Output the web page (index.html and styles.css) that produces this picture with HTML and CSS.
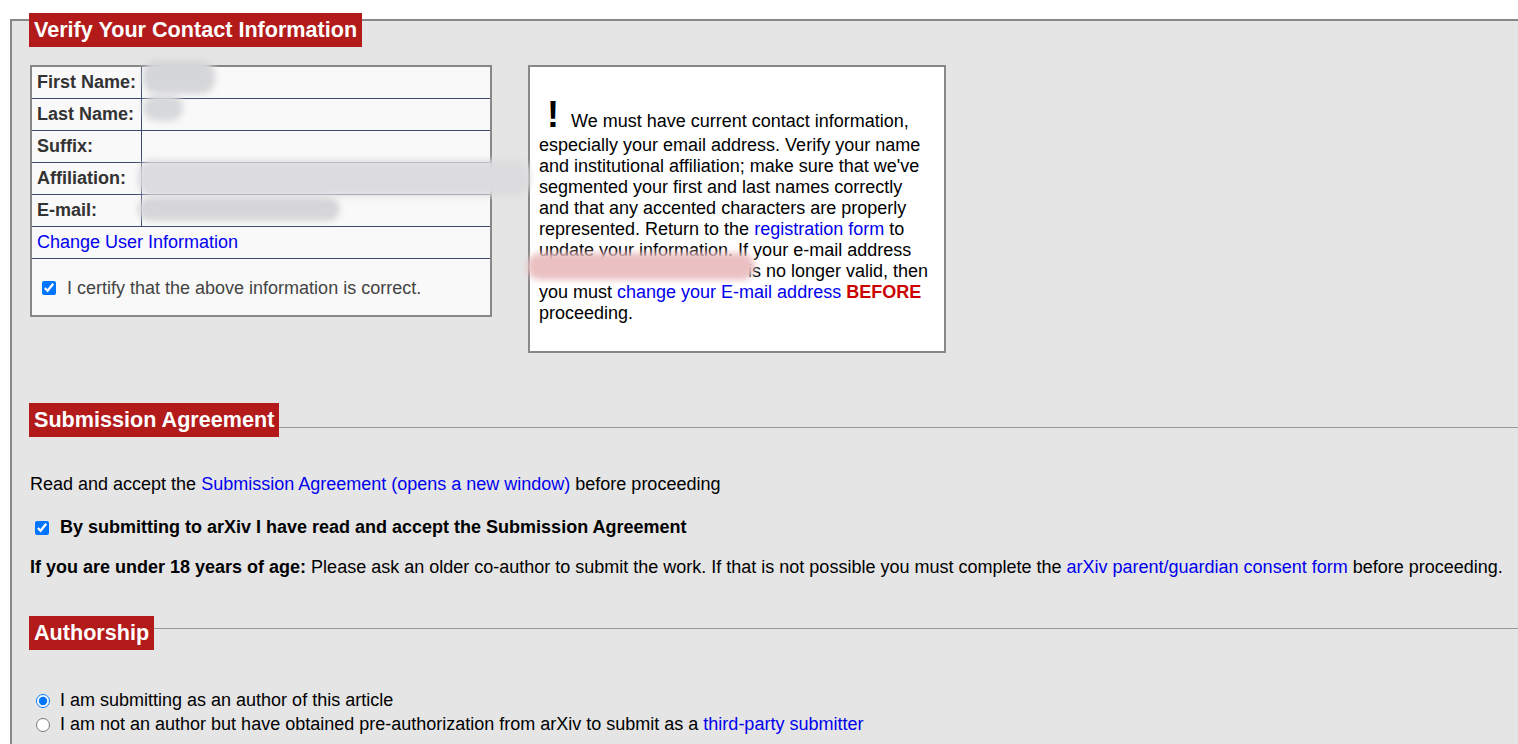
FILE: index.html
```html
<!DOCTYPE html>
<html>
<head>
<meta charset="utf-8">
<link rel="stylesheet" href="styles.css">
</head>
<body>
<div class="panel">
  <div class="legend main-legend">Verify Your Contact Information</div>

  <div class="contact">
    <table class="info">
      <tr><th>First Name:</th><td></td></tr>
      <tr><th>Last Name:</th><td></td></tr>
      <tr><th>Suffix:</th><td></td></tr>
      <tr><th>Affiliation:</th><td></td></tr>
      <tr><th>E-mail:</th><td></td></tr>
      <tr><td colspan="2" class="link-cell"><a href="#">Change User Information</a></td></tr>
      <tr><td colspan="2" class="certify-cell"><label class="certify"><input type="checkbox" checked><span>I certify that the above information is correct.</span></label></td></tr>
    </table>

    <div class="notice">
      <p><span class="bang">!</span> We must have current contact information, especially your email address. Verify your name and institutional affiliation; make sure that we've segmented your first and last names correctly and that any accented characters are properly represented. Return to the <a href="#">registration form</a> to update your information. If your e-mail address <span class="hidden-mail">user@example.org</span> is no longer valid, then you must <a href="#">change your E-mail address</a> <b class="before">BEFORE</b> proceeding.</p>
    </div>

    <span class="blob blob-first"></span>
    <span class="blob blob-last"></span>
    <span class="blob blob-aff"></span>
    <span class="blob blob-mail"></span>
    <span class="blob blob-pink"></span>
  </div>

  <div class="section-head">
    <div class="legend">Submission Agreement</div>
    <div class="rule"></div>
  </div>
  <p class="read">Read and accept the <a href="#">Submission Agreement (opens a new window)</a> before proceeding</p>
  <label class="agree"><input type="checkbox" checked><span>By submitting to arXiv I have read and accept the Submission Agreement</span></label>
  <p class="minor"><b>If you are under 18 years of age:</b> Please ask an older co-author to submit the work. If that is not possible you must complete the <a href="#">arXiv parent/guardian consent form</a> before proceeding.</p>

  <div class="section-head author-head">
    <div class="legend">Authorship</div>
    <div class="rule author-rule"></div>
  </div>
  <div class="radios">
    <label class="radio"><input type="radio" name="auth" checked><span>I am submitting as an author of this article</span></label>
    <label class="radio"><input type="radio" name="auth"><span>I am not an author but have obtained pre-authorization from arXiv to submit as a <a href="#">third-party submitter</a></span></label>
  </div>
</div>
</body>
</html>
```

FILE: styles.css
```css
html, body {
  margin: 0;
  padding: 0;
  background: #fff;
  overflow: hidden;
}

body {
  font-family: "Liberation Sans", Arial, sans-serif;
  font-size: 18px;
  color: #000;
}

a {
  color: #0000ee;
  text-decoration: none;
}

.panel {
  margin: 19px 0 0 10px;
  width: 1560px;
  height: 760px;
  border: 2px solid #888;
  border-right: none;
  background: #e5e5e5;
  padding: 0 0 0 18px;
  box-sizing: border-box;
}

.legend {
  display: inline-block;
  background: #b31b1b;
  color: #fff;
  font-weight: bold;
  font-size: 21.6px;
  height: 34px;
  line-height: 34px;
  padding: 0 5px;
  margin-left: -1px;
  flex: none;
}

.main-legend {
  margin-top: -8px;
}

.contact {
  position: relative;
  display: flex;
  align-items: flex-start;
  gap: 37px;
  margin-top: 18px;
}

.info {
  width: 462px;
  border-collapse: collapse;
  border: 2px solid #878787;
  background: #f9f9f9;
}

.info th,
.info td {
  border: 1px solid #3b4a6e;
  height: 31px;
  padding: 0 5px;
  text-align: left;
  color: #333;
  font-size: 18px;
  white-space: nowrap;
}

.info th {
  width: 98px;
  font-weight: bold;
}

.info .certify-cell {
  height: 54px;
  padding: 2px 0 0 10px;
}

.certify {
  display: flex;
  align-items: center;
  gap: 11px;
  color: #444;
}

input[type=checkbox],
input[type=radio] {
  margin: 0;
  width: 14px;
  height: 14px;
  accent-color: #0075ff;
  flex: none;
}

.notice {
  width: 418px;
  height: 288px;
  box-sizing: border-box;
  border: 2px solid #888;
  background: #fff;
  padding: 28px 9px 0 9px;
  margin-left: -1px;
}

.notice p {
  margin: 0;
  line-height: 21px;
}

.bang {
  font-size: 36px;
  font-weight: bold;
  line-height: 40px;
  padding: 0 7px 0 8px;
}

.hidden-mail {
  display: inline-block;
  width: 204px;
  color: transparent;
  overflow: hidden;
  vertical-align: top;
  white-space: nowrap;
}

.before {
  color: #cc0000;
}

.blob {
  position: absolute;
  display: block;
  filter: blur(3px);
  border-radius: 14px;
}

.blob-first {
  left: 113px;
  top: -5px;
  width: 72px;
  height: 34px;
  background: #d5d6d8;
}

.blob-last {
  left: 113px;
  top: 30px;
  width: 40px;
  height: 26px;
  background: #d7d8da;
}

.blob-aff {
  left: 108px;
  top: 95px;
  width: 392px;
  height: 36px;
  background: #dcdcde;
}

.blob-mail {
  left: 108px;
  top: 132px;
  width: 202px;
  height: 24px;
  background: #d6d6d8;
}

.blob-pink {
  left: 497px;
  top: 188px;
  width: 228px;
  height: 27px;
  background: #ebc0c2;
}

.section-head {
  display: flex;
  align-items: flex-start;
  margin-top: 50px;
}

.rule {
  flex: 1;
  height: 1px;
  background: #999;
  margin-top: 24px;
}

.author-rule {
  margin-top: 12px;
}

.read {
  margin: 37px 0 0 0;
  line-height: 21px;
}

.agree {
  display: flex;
  align-items: center;
  gap: 11px;
  margin: 22px 0 0 5px;
  font-weight: bold;
  line-height: 21px;
}

.minor {
  margin: 19px 0 0 0;
  line-height: 21px;
}

.author-head {
  margin-top: 38px;
}

.radios {
  margin-top: 40px;
  display: flex;
  flex-direction: column;
  gap: 3px;
}

.radio {
  display: flex;
  align-items: center;
  gap: 10px;
  margin-left: 6px;
  line-height: 21px;
}
```
